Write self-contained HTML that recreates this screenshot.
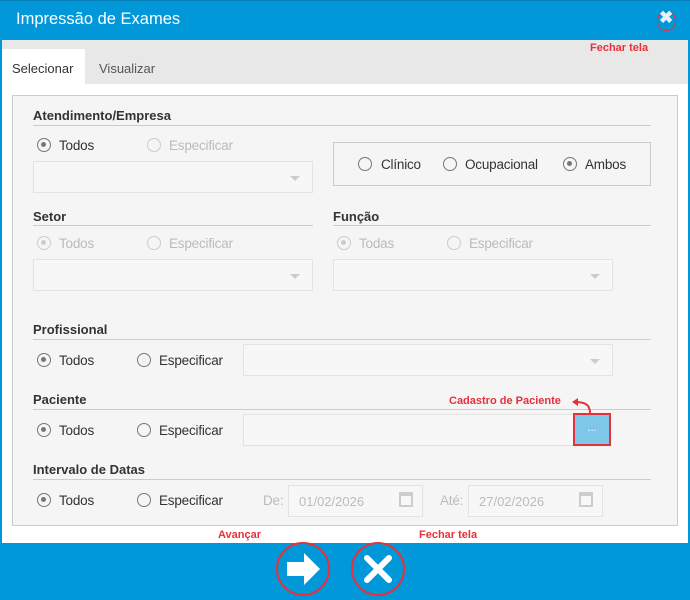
<!DOCTYPE html>
<html><head><meta charset="utf-8"><style>
*{margin:0;padding:0;box-sizing:border-box}
body{width:690px;height:600px;background:#0098d9;font-family:"Liberation Sans",sans-serif;position:relative;overflow:hidden;font-size:14px;color:#333}
.a{position:absolute}
.hd{left:0;top:0;width:690px;height:40px;background:#0098d9;border-top:1px solid #0a7fb8}
.title{left:16px;top:10px;color:#fff;font-size:16.5px}
.body{left:2px;top:40px;width:686px;height:503px;background:#fff}
.tabs{left:2px;top:40px;width:686px;height:44px;background:#e8e8e8}
.tab1{left:2px;top:49px;width:83px;height:35px;background:#fff;font-size:13px;padding:12px 0 0 10px;color:#333}
.tab2{left:99px;top:61px;font-size:13px;color:#555}
.panel{left:12px;top:95px;width:666px;height:431px;background:#f5f5f5;border:1px solid #ccc}
.lbl{font-weight:bold;font-size:13px;color:#333}
.ln{height:1px;background:#ccc}
.r{width:14px;height:14px;border:1.5px solid #777;border-radius:50%}
.r.on::after{content:"";position:absolute;left:3px;top:3px;width:5px;height:5px;border-radius:50%;background:#777}
.r.d{border-color:#ccc}.r.d.on::after{background:#ccc}
.t{font-size:13.5px;color:#333;letter-spacing:-0.2px}.t.d{color:#bbb}
.sel{height:32px;background:#f7f7f7;border:1px solid #e3e3e3}
.sel::after{content:"";position:absolute;right:12px;top:14px;border:5px solid transparent;border-top:5px solid #ccc}
.red{color:#e8303a;font-weight:bold;font-size:11px}
.circ{width:54px;height:54px;border:2px solid #e8303a;border-radius:50%}
</style></head><body>
<div class="a hd"></div>
<div class="a title">Impressão de Exames</div>
<div class="a" style="left:657px;top:11px;width:19px;height:20px;border:1.5px solid #e8303a;border-radius:50%"></div>
<div class="a" style="left:659px;top:8px;color:#e6f2fa;font-size:17px;font-weight:bold">✖</div>
<div class="a body"></div>
<div class="a tabs"></div>
<div class="a red" style="left:590px;top:42px">Fechar tela</div>
<div class="a tab1">Selecionar</div>
<div class="a tab2">Visualizar</div>
<div class="a panel"></div>

<div class="a lbl" style="left:33px;top:108px">Atendimento/Empresa</div>
<div class="a ln" style="left:33px;top:125px;width:618px"></div>
<div class="a r on" style="left:37px;top:138px"></div><div class="a t" style="left:59px;top:138px">Todos</div>
<div class="a r d" style="left:147px;top:138px"></div><div class="a t d" style="left:169px;top:138px">Especificar</div>
<div class="a sel" style="left:33px;top:161px;width:280px"></div>
<div class="a" style="left:333px;top:142px;width:318px;height:44px;border:1px solid #ccc"></div>
<div class="a r" style="left:358px;top:157px"></div><div class="a t" style="left:381px;top:157px">Clínico</div>
<div class="a r" style="left:443px;top:157px"></div><div class="a t" style="left:465px;top:157px">Ocupacional</div>
<div class="a r on" style="left:563px;top:157px"></div><div class="a t" style="left:585px;top:157px">Ambos</div>

<div class="a lbl" style="left:33px;top:209px">Setor</div>
<div class="a ln" style="left:33px;top:225px;width:280px"></div>
<div class="a r d on" style="left:37px;top:236px"></div><div class="a t d" style="left:59px;top:236px">Todos</div>
<div class="a r d" style="left:147px;top:236px"></div><div class="a t d" style="left:169px;top:236px">Especificar</div>
<div class="a sel" style="left:33px;top:259px;width:280px"></div>
<div class="a lbl" style="left:333px;top:209px">Função</div>
<div class="a ln" style="left:333px;top:225px;width:318px"></div>
<div class="a r d on" style="left:337px;top:236px"></div><div class="a t d" style="left:359px;top:236px">Todas</div>
<div class="a r d" style="left:447px;top:236px"></div><div class="a t d" style="left:469px;top:236px">Especificar</div>
<div class="a sel" style="left:333px;top:259px;width:280px"></div>

<div class="a lbl" style="left:33px;top:322px">Profissional</div>
<div class="a ln" style="left:33px;top:339px;width:618px"></div>
<div class="a r on" style="left:37px;top:353px"></div><div class="a t" style="left:59px;top:353px">Todos</div>
<div class="a r" style="left:137px;top:353px"></div><div class="a t" style="left:159px;top:353px">Especificar</div>
<div class="a sel" style="left:243px;top:344px;width:370px"></div>

<div class="a lbl" style="left:33px;top:392px">Paciente</div>
<div class="a ln" style="left:33px;top:409px;width:618px"></div>
<div class="a red" style="left:449px;top:395px">Cadastro de Paciente</div>
<div class="a r on" style="left:37px;top:423px"></div><div class="a t" style="left:59px;top:423px">Todos</div>
<div class="a r" style="left:137px;top:423px"></div><div class="a t" style="left:159px;top:423px">Especificar</div>
<div class="a" style="left:243px;top:414px;width:331px;height:32px;background:#f7f7f7;border:1px solid #e3e3e3"></div>
<div class="a" style="left:573px;top:413px;width:38px;height:33px;background:#7fc7e8;border:2px solid #e8303a;color:#fff;font-size:11px;text-align:center;line-height:26px">...</div>
<svg class="a" style="left:570px;top:396px" width="24" height="18"><path d="M20 17 C20 8 14 6 5 6" fill="none" stroke="#e8303a" stroke-width="2"/><path d="M2 6 L8 2 L8 10Z" fill="#e8303a"/></svg>

<div class="a lbl" style="left:33px;top:462px">Intervalo de Datas</div>
<div class="a ln" style="left:33px;top:479px;width:618px"></div>
<div class="a r on" style="left:37px;top:493px"></div><div class="a t" style="left:59px;top:493px">Todos</div>
<div class="a r" style="left:137px;top:493px"></div><div class="a t" style="left:159px;top:493px">Especificar</div>
<div class="a t d" style="left:263px;top:493px">De:</div>
<div class="a" style="left:288px;top:485px;width:135px;height:32px;background:#f7f7f7;border:1px solid #e3e3e3;color:#bbb;font-size:13px;padding:8px 10px">01/02/2026</div>
<div class="a t d" style="left:440px;top:493px">Até:</div>
<div class="a" style="left:468px;top:485px;width:135px;height:32px;background:#f7f7f7;border:1px solid #e3e3e3;color:#bbb;font-size:13px;padding:8px 10px">27/02/2026</div>
<div class="a" style="left:399px;top:492px;width:14px;height:15px;border:2px solid #ccc;border-top-width:4px"></div>
<div class="a" style="left:579px;top:492px;width:14px;height:15px;border:2px solid #ccc;border-top-width:4px"></div>

<div class="a red" style="left:218px;top:529px">Avançar</div>
<div class="a red" style="left:419px;top:529px">Fechar tela</div>
<div class="a circ" style="left:276px;top:542px"></div>
<svg class="a" style="left:286px;top:552px" width="36" height="34"><path d="M1 10 H18 V1 L34 17 L18 33 V24 H1Z" fill="#fff"/></svg>
<div class="a circ" style="left:351px;top:542px"></div>
<svg class="a" style="left:363px;top:554px" width="30" height="30"><path d="M4 4 L26 26 M26 4 L4 26" stroke="#fff" stroke-width="6" stroke-linecap="round"/></svg>
</body></html>
